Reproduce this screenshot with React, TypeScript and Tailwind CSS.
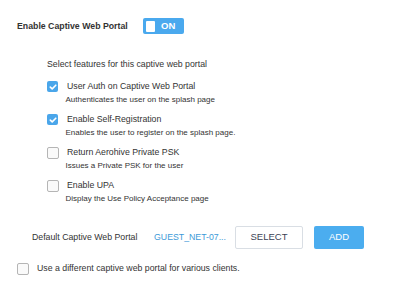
import React from "react";

const Checked = () => (
  <div className="w-[11px] h-[11px] rounded-[2px] bg-[#4aa6ea] flex items-center justify-center shrink-0 mt-[1px]">
    <svg width="8" height="8" viewBox="0 0 8 8" fill="none">
      <path d="M1.3 4.1 L3.2 5.9 L6.8 2.2" stroke="white" strokeWidth="1.6" strokeLinecap="round" strokeLinejoin="round" />
    </svg>
  </div>
);

const Unchecked = ({ cls = "" }: { cls?: string }) => (
  <div className={"w-[12px] h-[12px] rounded-[2px] border border-[#b5b5b5] bg-[#fafafa] shrink-0 " + cls} />
);

const Item = ({ checked, title, desc }: { checked: boolean; title: string; desc: string }) => (
  <div className="flex">
    {checked ? <Checked /> : <Unchecked cls="mt-[1px]" />}
    <div className={"flex flex-col " + (checked ? "ml-[7.5px]" : "ml-[6.5px]")}>
      <div className="text-[8.75px] leading-[12px] text-[#333] pl-[1.5px]">{title}</div>
      <div className="text-[8px] leading-[12px] mt-[2px] text-[#333]">{desc}</div>
    </div>
  </div>
);

export default function App() {
  return (
    <div
      className="w-[400px] h-[304px] bg-white flex flex-col"
      style={{ fontFamily: '"Liberation Sans", Arial, sans-serif' }}
    >
      <div className="flex items-center pt-[18px] pl-[17px]">
        <div className="w-[125.5px] text-[8.75px] font-bold text-[#333] leading-[16px]">Enable Captive Web Portal</div>
        <div className="w-[41px] h-[16px] rounded-[2px] bg-[#4aa9ee] flex items-center">
          <div className="w-[9.5px] h-[11px] bg-white ml-[3px] rounded-[1px]" />
          <span className="ml-[6px] text-[9.5px] font-bold text-white leading-none">ON</span>
        </div>
      </div>

      <div className="pl-[47px] mt-[25px] flex flex-col">
        <div className="text-[8.75px] leading-[11px] text-[#333]">Select features for this captive web portal</div>
        <div className="flex flex-col gap-[7px] mt-[10px]">
          <Item checked title="User Auth on Captive Web Portal" desc="Authenticates the user on the splash page" />
          <Item checked title="Enable Self-Registration" desc="Enables the user to register on the splash page." />
          <Item checked={false} title="Return Aerohive Private PSK" desc="Issues a Private PSK for the user" />
          <Item checked={false} title="Enable UPA" desc="Display the Use Policy Acceptance page" />
        </div>
      </div>

      <div className="flex items-center pl-[32px] mt-[21px]">
        <div className="w-[122px] text-[8.75px] text-[#333]">Default Captive Web Portal</div>
        <div className="w-[81px] text-[8.75px] text-[#3d9ad8]">GUEST_NET-07...</div>
        <div className="w-[68px] h-[23px] border border-[#d9dee4] rounded-[2px] bg-white flex items-center justify-center text-[9.5px] text-[#3c3f55]">
          SELECT
        </div>
        <div className="ml-[11px] w-[50px] h-[23px] rounded-[2px] bg-[#4badef] flex items-center justify-center text-[9.5px] text-white">
          ADD
        </div>
      </div>

      <div className="flex items-center pl-[17px] mt-[13px]">
        <Unchecked />
        <div className="ml-[8px] text-[8.75px] text-[#333]">Use a different captive web portal for various clients.</div>
      </div>
    </div>
  );
}
